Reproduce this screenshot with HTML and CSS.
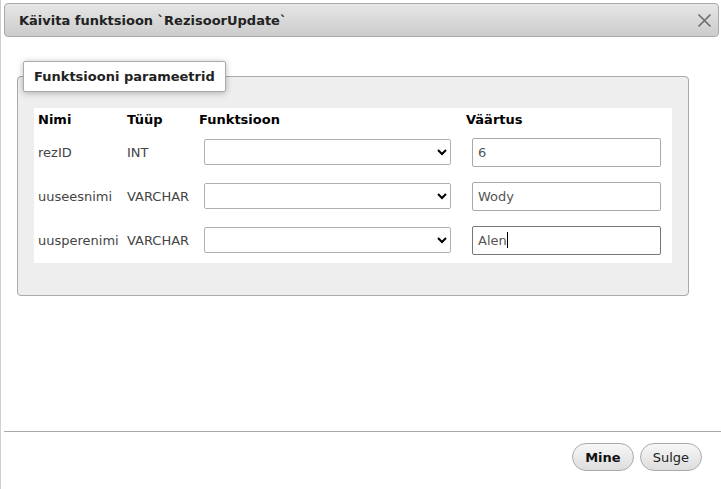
FILE: index.html
```html
<!DOCTYPE html>
<html lang="et">
<head>
<meta charset="utf-8">
<title>Käivita funktsioon</title>
<link rel="stylesheet" href="styles.css">
</head>
<body>
<div class="dialog">
  <div class="titlebar">
    <span class="title">Käivita funktsioon `RezisoorUpdate`</span>
    <button class="close" aria-label="Sulge">
      <svg width="15" height="15" viewBox="0 0 15 15"><path d="M1.5 1.5L13.5 13.5M13.5 1.5L1.5 13.5" stroke="#6b6b6b" stroke-width="1.6" fill="none"/></svg>
    </button>
  </div>
  <div class="content">
    <fieldset class="params">
      <legend class="legend">Funktsiooni parameetrid</legend>
      <div class="grid">
        <div class="cell head">Nimi</div>
        <div class="cell head">Tüüp</div>
        <div class="cell head">Funktsioon</div>
        <div class="cell head">Väärtus</div>

        <div class="cell row">rezID</div>
        <div class="cell row">INT</div>
        <div class="cell row"><select class="fn"><option></option></select></div>
        <div class="cell row"><input class="val" type="text" value="6"></div>

        <div class="cell row">uuseesnimi</div>
        <div class="cell row">VARCHAR</div>
        <div class="cell row"><select class="fn"><option></option></select></div>
        <div class="cell row"><input class="val" type="text" value="Wody"></div>

        <div class="cell row">uusperenimi</div>
        <div class="cell row">VARCHAR</div>
        <div class="cell row"><select class="fn"><option></option></select></div>
        <div class="cell row"><div class="val focused">Alen<span class="caret"></span></div></div>
      </div>
    </fieldset>
  </div>
  <div class="footer">
    <button class="btn primary">Mine</button>
    <button class="btn">Sulge</button>
  </div>
</div>
</body>
</html>
```
FILE: styles.css
```css
* { box-sizing: border-box; }
html, body { margin: 0; padding: 0; background: #fff; }
body {
  font-family: "DejaVu Sans", Verdana, sans-serif;
  font-size: 13px;
  color: #333;
}
.dialog {
  height: 489px;
  border-left: 1px solid #cfcfcf;
  padding-top: 3px;
  display: flex;
  flex-direction: column;
}
.titlebar {
  margin: 0 2px 0 3px;
  height: 34px;
  border: 1px solid #aaa;
  border-radius: 4px;
  background: linear-gradient(#e6e6e6, #cccccc);
  display: flex;
  align-items: center;
  justify-content: space-between;
  padding: 0 6px 0 14px;
}
.title {
  font-weight: bold;
  color: #222;
  font-size: 13px;
}
.close {
  border: 0;
  background: transparent;
  padding: 0;
  width: 15px;
  height: 15px;
  display: flex;
}
.content {
  flex: 1;
  padding: 24px 32px 0 16px;
}
.params {
  margin: 0;
  border: 1px solid #aaa;
  border-radius: 4px;
  background: #eee;
  padding: 16px 16px 32px 16px;
  min-width: 0;
}
.legend {
  margin-left: -11px;
  padding: 0 10px;
  height: 31px;
  line-height: 29px;
  background: #fff;
  border: 1px solid #aaa;
  border-radius: 2px;
  box-shadow: 0 1px 6px rgba(0,0,0,0.28);
  font-weight: bold;
  color: #222;
}
.grid {
  background: #fff;
  display: grid;
  grid-template-columns: 89px 72px 267px 1fr;
  padding-bottom: 1px;
}
.cell {
  padding-left: 4px;
  display: flex;
  align-items: center;
  white-space: nowrap;
}
.head {
  height: 22px;
  font-weight: bold;
  color: #000;
}
.row {
  height: 44px;
  color: #444;
}
.fn {
  margin-left: 5px;
  width: 247px;
  height: 26px;
  border: 1px solid #b0b0b0;
  border-radius: 2px;
  background: #fff;
  font-family: inherit;
  font-size: 13px;
}
.val {
  margin-left: 6px;
  width: 189px;
  height: 29px;
  border: 1px solid #aaa;
  border-radius: 2px;
  padding: 0 5px;
  font-family: inherit;
  font-size: 13px;
  color: #555;
  background: #fff;
  outline: none;
}
div.val {
  display: flex;
  align-items: center;
}
.focused {
  border-color: #767676;
}
.caret {
  display: inline-block;
  width: 1px;
  height: 16px;
  background: #000;
}
.footer {
  margin-left: 3px;
  height: 58px;
  border-top: 1px solid #aaa;
  display: flex;
  justify-content: flex-end;
  align-items: flex-start;
  gap: 6px;
  padding: 11px 19px 0 0;
}
.btn {
  height: 28px;
  padding: 0 12px;
  border: 1px solid #aaa;
  border-radius: 14px;
  background: linear-gradient(#f7f7f7, #dddddd);
  font-family: inherit;
  font-size: 13px;
  color: #222;
}
.btn.primary {
  font-weight: bold;
  color: #111;
}
```
